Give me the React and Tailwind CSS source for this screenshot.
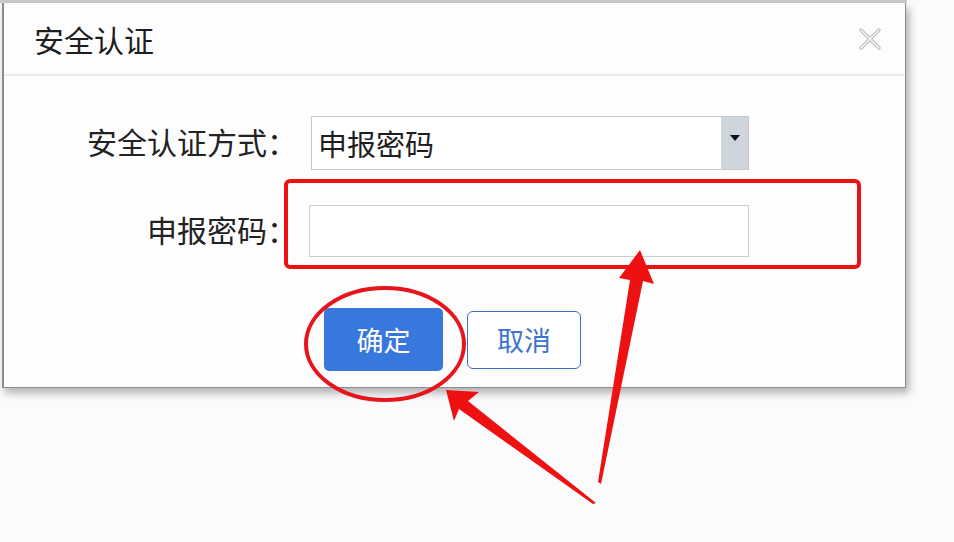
import React from "react";

const font = { fontFamily: '"Noto Sans CJK SC", "Noto Sans", sans-serif' };

const CloseIcon = () => (
  <svg width="22" height="22" viewBox="0 0 22 22">
    <path d="M2 2 L20 20 M20 2 L2 20" stroke="#b4b4b4" strokeWidth="3.2" strokeLinecap="round" />
    <path d="M2 2 L20 20 M20 2 L2 20" stroke="#ffffff" strokeWidth="1.3" strokeLinecap="round" />
  </svg>
);

const Annotations = () => (
  <svg className="absolute left-0 top-0 pointer-events-none" width="954" height="542" viewBox="0 0 954 542">
    <rect x="286" y="181" width="573" height="86" rx="4" fill="none" stroke="#ee1111" strokeWidth="4" />
    <ellipse cx="385" cy="344" rx="79" ry="56" fill="none" stroke="#e8141b" strokeWidth="4" />
    <polygon points="640,250 654,284 643,281 601,484 598,482 630,280 619,278" fill="#ee1111" />
    <polygon points="446,390 479,392 468,401 596,503 593,504 459,409 454,421" fill="#ee1111" />
  </svg>
);

export default function App() {
  return (
    <div className="relative w-[954px] h-[542px] bg-[#fbfbfd] overflow-hidden" style={font}>
      <div className="h-[3px] w-[907px] bg-[#c9cacc]" />
      <div className="ml-[2px] w-[904px] bg-[#fdfdfe] border-l-2 border-r border-b border-[#8c8c8c] shadow-[3px_5px_8px_rgba(0,0,0,0.3)]">
        <div className="h-[73px] flex items-center justify-between pl-[30px] pr-[24px] border-b-2 border-[#ebebee]">
          <span className="text-[30px] text-[#1d1d1d] leading-none">安全认证</span>
          <CloseIcon />
        </div>
        <div className="pt-[40px] pb-[16px]">
          <div className="flex items-center">
            <div className="w-[293px] text-right text-[30px] text-[#222] leading-none -mt-[4px]">安全认证方式：</div>
            <div className="ml-[14px] w-[438px] h-[54px] flex border border-[#c9c9c9] bg-white">
              <div className="flex-1 flex items-center pl-[6px] text-[29px] text-[#1e1e1e] leading-none">申报密码</div>
              <div className="w-[27px] bg-[#cfd5dc] flex justify-center pt-[18px]">
                <div className="w-0 h-0 border-l-[5px] border-r-[5px] border-t-[6px] border-l-transparent border-r-transparent border-t-[#111]" />
              </div>
            </div>
          </div>
          <div className="flex items-center mt-[35px]">
            <div className="w-[293px] text-right text-[30px] text-[#222] leading-none -mt-[4px]">申报密码：</div>
            <div className="ml-[12px] w-[440px] h-[52px] border border-[#cdcdcd] bg-white" />
          </div>
          <div className="flex items-center mt-[51px] pl-[320px] gap-[24px]">
            <button className="w-[119px] h-[63px] rounded-[5px] bg-[#3877dc] text-white text-[27px] leading-none">确定</button>
            <button className="w-[114px] h-[58px] rounded-[6px] border-[1.5px] border-[#3a70c9] bg-white text-[#3a74cc] text-[27px] leading-none">取消</button>
          </div>
        </div>
      </div>
      <Annotations />
    </div>
  );
}
